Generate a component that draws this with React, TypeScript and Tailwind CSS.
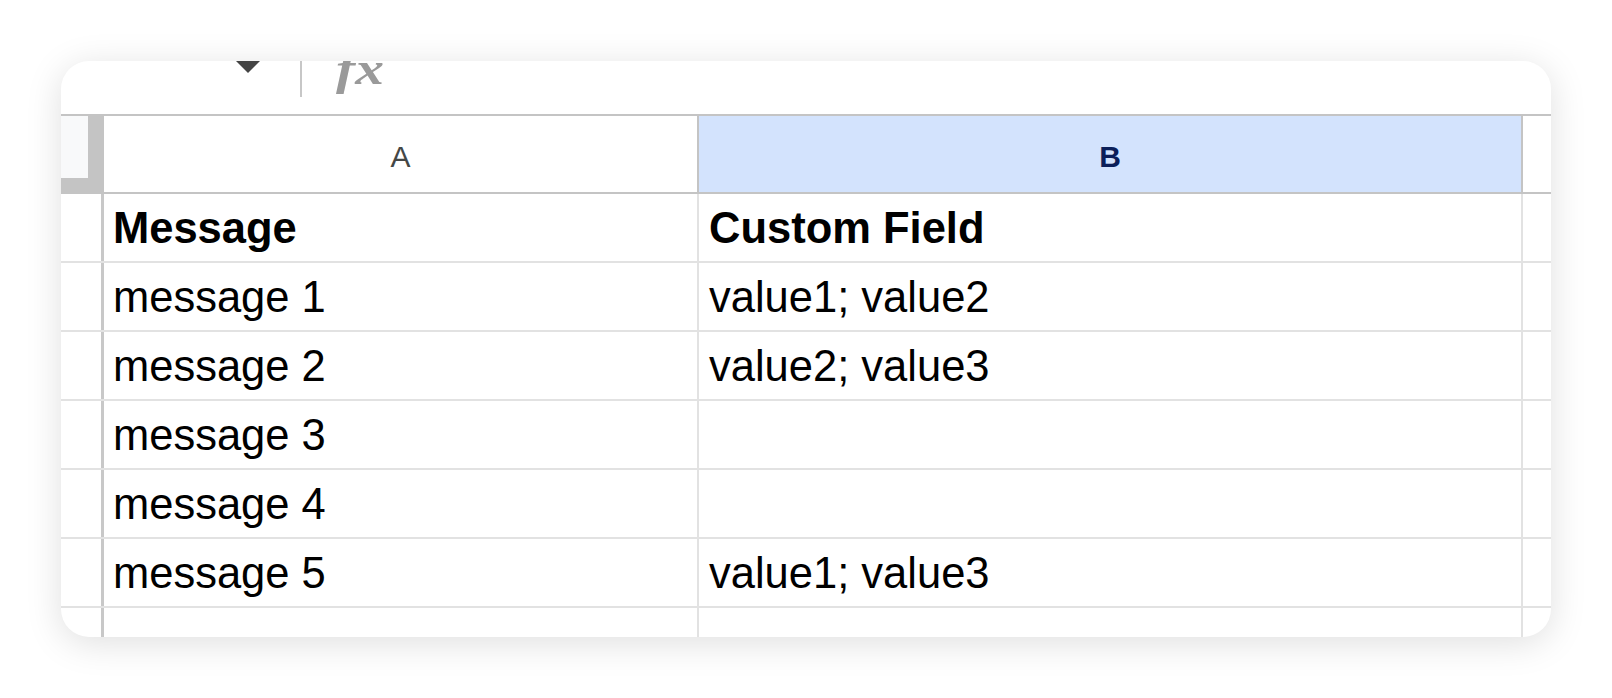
const rows = [
  { a: "Message", b: "Custom Field", bold: true },
  { a: "message 1", b: "value1; value2" },
  { a: "message 2", b: "value2; value3" },
  { a: "message 3", b: "" },
  { a: "message 4", b: "" },
  { a: "message 5", b: "value1; value3" },
]

function FormulaBar() {
  return (
    <div className="flex h-[55px] shrink-0 items-start border-b-2 border-[#c4c4c4]">
      <svg className="ml-[175px] mt-0" width="24" height="12" viewBox="0 0 24 12">
        <path d="M0 0h24L12 12z" fill="#444444" />
      </svg>
      <div className="ml-[40px] h-[36px] w-[2px] bg-[#c7c7c7]" />
      <span className="ml-[34px] -mt-[15px] inline-block origin-left scale-x-[1.25] font-['Liberation_Serif',serif] text-[46px] font-bold italic leading-none text-[#9a9a9a]">
        fx
      </span>
    </div>
  )
}

function HeaderRow() {
  return (
    <div className="flex h-[78px] shrink-0 border-b-2 border-[#c4c4c4]">
      <div className="w-[43px] shrink-0 border-r-[16px] border-b-[14px] border-[#c4c4c4] bg-[#f8f9fa]" />
      <div className="flex w-[595px] shrink-0 items-center justify-center border-r-2 border-[#c4c4c4] pt-[6px] text-[30px] leading-none text-[#444746]">
        A
      </div>
      <div className="flex w-[824px] shrink-0 items-center justify-center border-r-2 border-[#c4c4c4] bg-[#d3e3fd] pt-[6px] text-[30px] font-bold leading-none text-[#0b1f5a]">
        B
      </div>
      <div className="flex-1" />
    </div>
  )
}

function DataRow({ a, b, bold, last }: { a: string; b: string; bold?: boolean; last?: boolean }) {
  return (
    <div
      className={
        last
          ? "flex flex-1 text-[43.5px] leading-none text-black"
          : "flex h-[69px] shrink-0 border-b-2 border-[#e2e2e2] text-[43.5px] leading-none text-black"
      }
    >
      <div className="w-[43px] shrink-0 border-r-[3px] border-[#c8c8c8]" />
      <div
        className={
          "flex w-[595px] shrink-0 items-center border-r-2 border-[#e2e2e2] pl-[9px] pt-[2px] " +
          (bold ? "font-bold" : "")
        }
      >
        {a}
      </div>
      <div
        className={
          "flex w-[824px] shrink-0 items-center border-r-2 border-[#e2e2e2] pl-[10px] pt-[2px] " +
          (bold ? "font-bold" : "")
        }
      >
        {b}
      </div>
      <div className="flex-1" />
    </div>
  )
}

export default function App() {
  return (
    <div className="min-h-screen bg-white p-[61px] font-['Liberation_Sans',Arial,sans-serif]">
      <div className="flex h-[576px] w-full flex-col overflow-hidden rounded-[28px] bg-white shadow-[0_6px_36px_rgba(0,0,0,0.13)]">
        <FormulaBar />
        <HeaderRow />
        {rows.map((r) => (
          <DataRow key={r.a} a={r.a} b={r.b} bold={r.bold} />
        ))}
        <DataRow a="" b="" last />
      </div>
    </div>
  )
}
